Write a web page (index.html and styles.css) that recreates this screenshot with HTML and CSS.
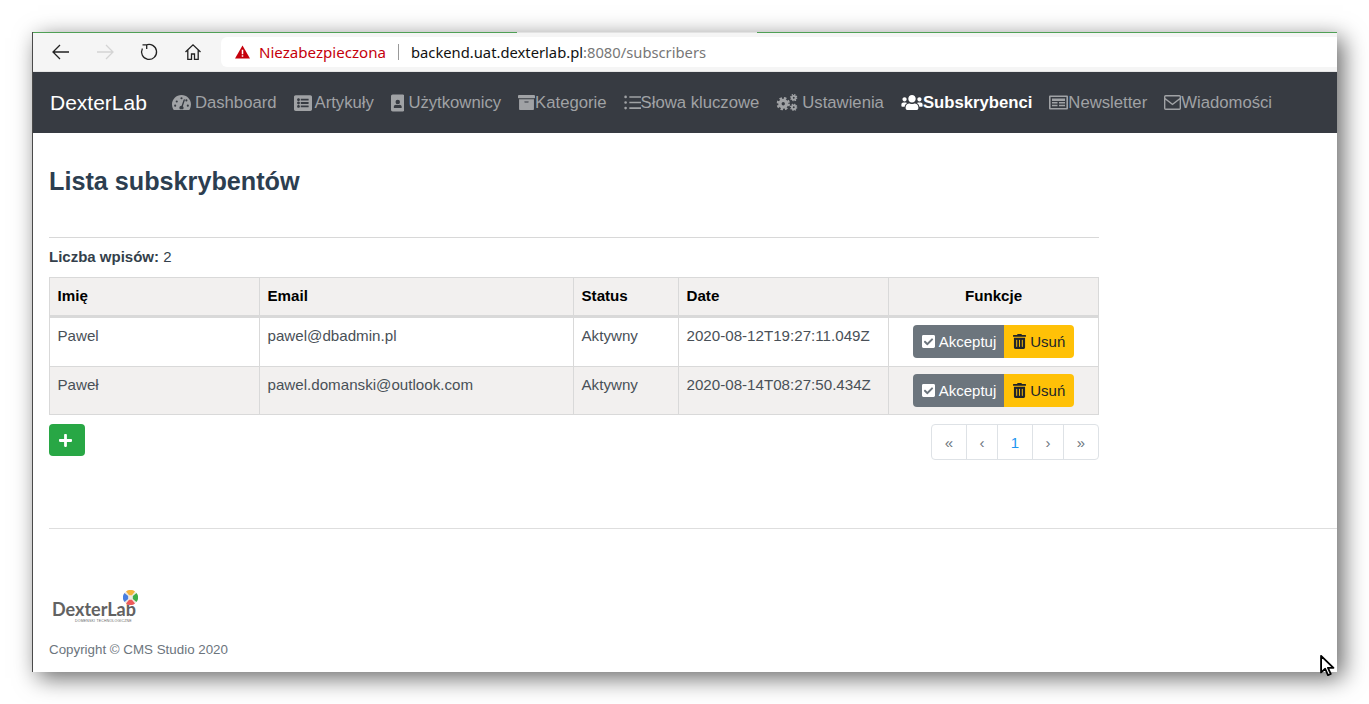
FILE: index.html
```html
<!DOCTYPE html>
<html lang="pl">
<head>
  <meta charset="utf-8">
  <title>Lista subskrybentów</title>
  <link rel="stylesheet" href="styles.css">
</head>
<body>
<svg class="defs" width="0" height="0">
  <symbol id="i-check" viewBox="0 0 448 512"><path d="M400 480H48c-26.51 0-48-21.49-48-48V80c0-26.51 21.49-48 48-48h352c26.51 0 48 21.49 48 48v352c0 26.51-21.49 48-48 48zm-204.686-98.059l184-184c6.248-6.248 6.248-16.379 0-22.627l-22.627-22.627c-6.248-6.248-16.379-6.249-22.628 0L184 302.745l-69.059-69.059c-6.248-6.248-16.379-6.248-22.628 0L69.686 256.313c-6.248 6.248-6.248 16.379 0 22.627l104 104c6.249 6.25 16.379 6.25 22.628.001z"/></symbol>
  <symbol id="i-trash" viewBox="0 0 448 512"><path d="M32 464a48 48 0 0 0 48 48h288a48 48 0 0 0 48-48V128H32zm272-256a16 16 0 0 1 32 0v224a16 16 0 0 1-32 0zm-96 0a16 16 0 0 1 32 0v224a16 16 0 0 1-32 0zm-96 0a16 16 0 0 1 32 0v224a16 16 0 0 1-32 0zM432 32H312l-9.4-18.7A24 24 0 0 0 281.1 0H166.8a23.72 23.72 0 0 0-21.4 13.3L136 32H16A16 16 0 0 0 0 48v32a16 16 0 0 0 16 16h416a16 16 0 0 0 16-16V48a16 16 0 0 0-16-16z"/></symbol>
  <symbol id="i-gear" viewBox="0 0 24 24"><circle cx="12" cy="12" r="6" fill="none" stroke="currentColor" stroke-width="6"/><circle cx="12" cy="12" r="10" fill="none" stroke="currentColor" stroke-width="4" stroke-dasharray="4.4 3.45"/></symbol>
</svg>

<div class="window">
  <div class="load-line"></div>
  <div class="chrome">
    <div class="chrome-buttons">
      <svg class="chrome-icon" viewBox="0 0 20 20"><path d="M18 10H2M9 3l-7 7 7 7" fill="none" stroke="#222" stroke-width="1.3"/></svg>
      <svg class="chrome-icon" viewBox="0 0 20 20"><path d="M2 10h16M11 3l7 7-7 7" fill="none" stroke="#d4d4d4" stroke-width="1.3"/></svg>
      <svg class="chrome-icon" viewBox="0 0 20 20"><path d="M7 3.1A7.5 7.5 0 1 1 3.4 6.5M3.5 2.8h4.2V7" fill="none" stroke="#222" stroke-width="1.3"/></svg>
      <svg class="chrome-icon" viewBox="0 0 20 20"><path d="M2.5 10L10 2.8l7.5 7.2M4.8 8.3v9h3.7V12h3v5.3h3.7v-9" fill="none" stroke="#222" stroke-width="1.3"/></svg>
    </div>
    <div class="omnibox">
      <svg class="warn" viewBox="0 0 16 14"><path d="M8 0l8 14H0z" fill="#c5000b"/><path d="M7.2 4.5h1.6v5H7.2zM7.2 10.5h1.6V12H7.2z" fill="#fff"/></svg>
      <span class="insecure">Niezabezpieczona</span>
      <span class="divider"></span>
      <span class="url">backend.uat.dexterlab.pl<span class="url-rest">:8080/subscribers</span></span>
    </div>
  </div>

  <nav class="navbar">
    <a class="brand" href="#">DexterLab</a>
    <a class="nav-item" href="#">
      <svg class="icon icon-gauge" viewBox="0 0 576 512"><path fill-rule="evenodd" d="M288 32C129 32 0 161 0 320c0 53 14 102 39 145 6 9 16 15 27 15h444c11 0 21-6 27-15 25-43 39-92 39-145C576 161 447 32 288 32zm0 64a32 32 0 1 1 0 64 32 32 0 0 1 0-64zM96 384a32 32 0 1 1 0-64 32 32 0 0 1 0 64zm48-128a32 32 0 1 1 0-64 32 32 0 0 1 0 64zm246-72L329 367c14 13 23 31 23 49 0 18-6 34-16 48H240c-10-14-16-30-16-48 0-35 28-64 64-64h3l61-182c3-11 15-17 26-14 11 4 16 15 12 28zm14 8a32 32 0 1 1 64 0 32 32 0 0 1-64 0zm76 192a32 32 0 1 1 0-64 32 32 0 0 1 0 64z"/></svg>
      <span class="gap">Dashboard</span>
    </a>
    <a class="nav-item" href="#">
      <svg class="icon icon-list-alt" viewBox="0 0 512 512"><path d="M464 480H48c-26.51 0-48-21.49-48-48V80c0-26.51 21.49-48 48-48h416c26.51 0 48 21.49 48 48v352c0 26.51-21.49 48-48 48zM128 120c-22.091 0-40 17.909-40 40s17.909 40 40 40 40-17.909 40-40-17.909-40-40-40zm0 96c-22.091 0-40 17.909-40 40s17.909 40 40 40 40-17.909 40-40-17.909-40-40-40zm0 96c-22.091 0-40 17.909-40 40s17.909 40 40 40 40-17.909 40-40-17.909-40-40-40zm288-136v-32c0-6.627-5.373-12-12-12H204c-6.627 0-12 5.373-12 12v32c0 6.627 5.373 12 12 12h200c6.627 0 12-5.373 12-12zm0 96v-32c0-6.627-5.373-12-12-12H204c-6.627 0-12 5.373-12 12v32c0 6.627 5.373 12 12 12h200c6.627 0 12-5.373 12-12zm0 96v-32c0-6.627-5.373-12-12-12H204c-6.627 0-12 5.373-12 12v32c0 6.627 5.373 12 12 12h200c6.627 0 12-5.373 12-12z"/></svg>
      <span class="gap-small">Artykuły</span>
    </a>
    <a class="nav-item" href="#">
      <svg class="icon icon-badge" viewBox="0 0 384 512"><path fill-rule="evenodd" d="M48 16h288c26 0 48 22 48 48v384c0 26-22 48-48 48H48c-26 0-48-22-48-48V64c0-26 22-48 48-48zm144 144a64 64 0 1 0 0 128 64 64 0 0 0 0-128zm-112 224c0 11 9 16 19 16h186c10 0 19-5 19-16v-19c0-32-29-58-64-58-11 0-19 8-48 8s-37-8-48-8c-35 0-64 26-64 58z"/></svg>
      <span class="gap">Użytkownicy</span>
    </a>
    <a class="nav-item" href="#">
      <svg class="icon" viewBox="0 0 512 512"><path d="M32 448c0 17.7 14.3 32 32 32h384c17.7 0 32-14.3 32-32V160H32v288zm160-212c0-6.6 5.4-12 12-12h104c6.6 0 12 5.4 12 12v8c0 6.6-5.4 12-12 12H204c-6.6 0-12-5.4-12-12v-8zM480 32H32C14.3 32 0 46.3 0 64v48c0 8.8 7.2 16 16 16h480c8.8 0 16-7.2 16-16V64c0-17.7-14.3-32-32-32z"/></svg>
      <span>Kategorie</span>
    </a>
    <a class="nav-item" href="#">
      <svg class="icon" viewBox="0 0 512 512"><path d="M48 48a40 40 0 1 1 0 80 40 40 0 0 1 0-80zm0 168a40 40 0 1 1 0 80 40 40 0 0 1 0-80zm0 168a40 40 0 1 1 0 80 40 40 0 0 1 0-80zM160 64h352v48H160zm0 168h352v48H160zm0 168h352v48H160z"/></svg>
      <span>Słowa kluczowe</span>
    </a>
    <a class="nav-item" href="#">
      <svg class="icon icon-gears" viewBox="0 0 42 34">
        <use href="#i-gear" x="0" y="6" width="27" height="27"/>
        <use href="#i-gear" x="27" y="0" width="15" height="15"/>
        <use href="#i-gear" x="27" y="19" width="15" height="15"/>
      </svg>
      <span class="gap">Ustawienia</span>
    </a>
    <a class="nav-item nav-active" href="#">
      <svg class="icon icon-users" viewBox="0 0 640 512"><path d="M96 224c35.3 0 64-28.7 64-64s-28.7-64-64-64-64 28.7-64 64 28.7 64 64 64zm448 0c35.3 0 64-28.7 64-64s-28.7-64-64-64-64 28.7-64 64 28.7 64 64 64zm32 32h-64c-17.6 0-33.5 7.1-45.1 18.6 40.3 22.1 68.9 62 75.1 109.4h66c17.7 0 32-14.3 32-32v-32c0-35.3-28.7-64-64-64zm-256 0c61.9 0 112-50.1 112-112S381.9 32 320 32 208 82.1 208 144s50.1 112 112 112zm76.8 32h-8.3c-20.8 10-43.9 16-68.5 16s-47.6-6-68.5-16h-8.3C179.6 288 128 339.6 128 403.2V432c0 26.5 21.5 48 48 48h288c26.5 0 48-21.5 48-48v-28.8c0-63.6-51.6-115.2-115.2-115.2zm-223.7-13.4C161.5 263.1 145.6 256 128 256H64c-35.3 0-64 28.7-64 64v32c0 17.7 14.3 32 32 32h65.9c6.3-47.4 34.9-87.3 75.2-109.4z"/></svg>
      <span>Subskrybenci</span>
    </a>
    <a class="nav-item" href="#">
      <svg class="icon icon-paper" viewBox="0 0 19 14"><path fill-rule="evenodd" d="M1 0h17a1 1 0 0 1 1 1v12a1 1 0 0 1-1 1H1a1 1 0 0 1-1-1V1a1 1 0 0 1 1-1zm.6 1.6v10.8h15.8V1.6zM3 3h13v2.4H3zM3 6.6h5.5v1.5H3zm0 2.7h5.5v1.5H3zM10 6.6h6v1.5h-6zm0 2.7h6v1.5h-6z"/></svg>
      <span>Newsletter</span>
    </a>
    <a class="nav-item" href="#">
      <svg class="icon" viewBox="0 0 16 14"><path fill-rule="evenodd" d="M1.5 0h13A1.5 1.5 0 0 1 16 1.5v11a1.5 1.5 0 0 1-1.5 1.5h-13A1.5 1.5 0 0 1 0 12.5v-11A1.5 1.5 0 0 1 1.5 0zm0 1.3a.2.2 0 0 0-.2.2v1.3L8 8l6.7-5.2V1.5a.2.2 0 0 0-.2-.2zm13.2 3.1L8 9.6 1.3 4.4v8.1c0 .1.1.2.2.2h13a.2.2 0 0 0 .2-.2z"/></svg>
      <span>Wiadomości</span>
    </a>
  </nav>

  <main class="content">
    <div class="panel">
      <h1 class="title">Lista subskrybentów</h1>
      <hr class="rule">
      <p class="count"><strong>Liczba wpisów:</strong> 2</p>
      <table class="grid">
        <thead>
          <tr>
            <th class="col-name">Imię</th>
            <th class="col-email">Email</th>
            <th class="col-status">Status</th>
            <th class="col-date">Date</th>
            <th class="col-actions">Funkcje</th>
          </tr>
        </thead>
        <tbody>
          <tr class="row-first">
            <td>Pawel</td>
            <td>pawel@dbadmin.pl</td>
            <td>Aktywny</td>
            <td>2020-08-12T19:27:11.049Z</td>
            <td class="actions">
              <div class="btn-group">
                <a class="btn btn-grey" href="#"><svg class="btn-icon"><use href="#i-check"/></svg>Akceptuj</a>
                <a class="btn btn-yellow" href="#"><svg class="btn-icon"><use href="#i-trash"/></svg>Usuń</a>
              </div>
            </td>
          </tr>
          <tr class="row-alt">
            <td>Paweł</td>
            <td>pawel.domanski@outlook.com</td>
            <td>Aktywny</td>
            <td>2020-08-14T08:27:50.434Z</td>
            <td class="actions">
              <div class="btn-group">
                <a class="btn btn-grey" href="#"><svg class="btn-icon"><use href="#i-check"/></svg>Akceptuj</a>
                <a class="btn btn-yellow" href="#"><svg class="btn-icon"><use href="#i-trash"/></svg>Usuń</a>
              </div>
            </td>
          </tr>
        </tbody>
      </table>
      <div class="table-foot">
        <a class="btn-add" href="#"><svg viewBox="0 0 448 512"><path d="M416 208H272V64c0-17.67-14.33-32-32-32h-32c-17.67 0-32 14.33-32 32v144H32c-17.67 0-32 14.33-32 32v32c0 17.67 14.33 32 32 32h144v144c0 17.67 14.33 32 32 32h32c17.67 0 32-14.33 32-32V304h144c17.67 0 32-14.33 32-32v-32c0-17.67-14.33-32-32-32z"/></svg></a>
        <ul class="pager">
          <li class="page p-first">«</li>
          <li class="page p-prev">‹</li>
          <li class="page p-now">1</li>
          <li class="page p-next">›</li>
          <li class="page p-last">»</li>
        </ul>
      </div>
    </div>
    <footer class="footer">
      <div class="logo">
        <span class="logo-name">DexterLab</span>
        <svg class="logo-mark" viewBox="0 0 16 16">
          <circle cx="8" cy="8" r="8" fill="#efe9e0"/>
          <path d="M3.2 1.6a8 8 0 0 1 9.6 0L9.5 5.5h-3z" fill="#f5b43c"/>
          <path d="M14.4 3.2a8 8 0 0 1 0 9.6L10.500 9.500v-3z" fill="#3fae49"/>
          <path d="M12.800 14.400a8 8 0 0 1-9.600 0L6.500 10.500h3z" fill="#ee5a5a"/>
          <path d="M1.600 12.800a8 8 0 0 1 0-9.600L5.500 6.500v3z" fill="#4a7fe0"/>
        </svg>
        <span class="logo-sub">DOMENSKI TECHNOLOGICZNE</span>
      </div>
      <p class="copyright">Copyright © CMS Studio 2020</p>
    </footer>
  </main>
</div>

<svg class="cursor" viewBox="0 0 16 24"><path d="M1 1v18l4.5-4 3 7 3-1.3-3-6.7h6z" fill="#fff" stroke="#000" stroke-width="2" stroke-linejoin="round"/></svg>
</body>
</html>
```

FILE: styles.css
```css
html, body {
    margin: 0;
    height: 100%;
    background: #fff;
    overflow: hidden;
}

body {
    position: relative;
    font-family: "Liberation Sans", Arial, sans-serif;
    color: #495057;
}

a {
    text-decoration: none;
}

.defs {
    position: absolute;
}

.window {
    box-sizing: border-box;
    width: 1305px;
    height: 640px;
    margin: 32px 0 0 32px;
    background: #fff;
    border-left: 1px solid #4a4a4a;
    box-shadow: 6px 6px 22px 0 rgb(0 0 0 / 60%);
    overflow: hidden;
}

.load-line {
    height: 1px;
    background: linear-gradient(to right, #4f9f55 484px, #e2e2e2 484px, #e2e2e2 724px, #4f9f55 724px);
}

.chrome {
    display: flex;
    align-items: center;
    height: 38px;
    background: #f5f5f5;
    border-bottom: 1px solid #e6e6e6;
}

.chrome-buttons {
    display: flex;
    gap: 24px;
    padding-left: 18px;
    width: 188px;
    box-sizing: border-box;
}

.chrome-icon {
    width: 20px;
    height: 20px;
}

.omnibox {
    flex: 1;
    display: flex;
    align-items: center;
    height: 30px;
    background: #fff;
    border-radius: 6px 0 0 6px;
    font-family: "Noto Sans", sans-serif;
    font-size: 14.75px;
}

.warn {
    width: 15px;
    height: 14px;
    margin-left: 14px;
}

.insecure {
    margin-left: 9px;
    font-size: 15.1px;
    color: #c5000b;
}

.divider {
    width: 1px;
    height: 16px;
    margin: 0 12px;
    background: #999;
}

.url {
    color: #111;
}

.url-rest {
    color: #777;
}

.navbar {
    display: flex;
    align-items: center;
    height: 61px;
    background: #373b42;
    padding-left: 17px;
    font-size: 16.7px;
}

.brand {
    font-size: 21px;
    color: #fff;
    margin-right: 25px;
}

.nav-item {
    display: flex;
    align-items: center;
    margin-right: 17px;
    color: #a0a2a5;
}

.nav-active {
    color: #fff;
    font-weight: bold;
}

.icon {
    width: 17px;
    height: 17px;
    fill: currentColor;
    flex: none;
}

.icon-gauge {
    width: 19px;
}

.icon-list-alt {
    width: 18px;
    height: 18px;
}

.icon-badge {
    width: 13.5px;
    height: 18px;
}

.icon-gears {
    width: 22px;
}

.icon-users {
    width: 22px;
}

.icon-paper {
    width: 19px;
}

.gap {
    margin-left: 4px;
}

.gap-small {
    margin-left: 3px;
}

.content {
    padding-left: 16px;
}

.panel {
    width: 1050px;
}

.title {
    margin: 0;
    padding-top: 33px;
    font-size: 25.2px;
    line-height: 30px;
    color: #2c3e50;
}

.rule {
    margin: 41px 0 0;
    border: 0;
    border-top: 1px solid #d8d8d8;
}

.count {
    margin: 10px 0 12px;
    font-size: 15px;
    line-height: 17px;
    color: #343f4b;
}

.grid {
    width: 1050px;
    border-collapse: collapse;
    table-layout: fixed;
    font-size: 15.15px;
}

.grid th, .grid td {
    border: 1px solid #d9d9d9;
    padding: 0 7.5px;
    text-align: left;
    box-sizing: border-box;
}

.grid th {
    height: 39px;
    padding-bottom: 2px;
    background: #f2f0ef;
    color: #000;
    border-bottom-width: 3px;
}

.grid td {
    height: 48px;
    vertical-align: top;
    padding-top: 9px;
}

.grid .row-first td {
    height: 50px;
}

.row-alt td {
    background: #f2f0ef;
}

.col-name {
    width: 210px;
}

.col-email {
    width: 314px;
}

.col-status {
    width: 105px;
}

.col-date {
    width: 210px;
}

.grid .col-actions {
    text-align: center;
}

.grid .actions {
    padding-top: 7px;
}

.btn-group {
    display: flex;
    justify-content: center;
    font-size: 15px;
}

.btn {
    display: flex;
    align-items: center;
    height: 33px;
    padding: 0 9px;
    box-sizing: border-box;
}

.btn-grey {
    padding-right: 8px;
    background: #6c757d;
    color: #fff;
    border-radius: 4px 0 0 4px;
}

.btn-yellow {
    background: #ffc107;
    color: #212529;
    border-radius: 0 4px 4px 0;
}

.btn-icon {
    width: 13px;
    height: 15px;
    margin-right: 4px;
    fill: currentColor;
}

.table-foot {
    display: flex;
    justify-content: space-between;
    align-items: flex-start;
    margin-top: 9px;
}

.btn-add {
    display: flex;
    align-items: center;
    justify-content: center;
    width: 36px;
    height: 32px;
    background: #28a745;
    border-radius: 4px;
}

.btn-add svg {
    width: 13px;
    height: 15px;
    margin-right: 4px;
    fill: #fff;
}

.pager {
    display: flex;
    margin: 0;
    padding: 0;
    list-style: none;
    border: 1px solid #dee2e6;
    border-radius: 4px;
    height: 34px;
    font-size: 15px;
}

.page {
    display: flex;
    align-items: center;
    justify-content: center;
    color: #6c757d;
    border-left: 1px solid #dee2e6;
    box-sizing: border-box;
}

.p-first {
    width: 34px;
    border-left: 0;
}

.p-prev {
    width: 31px;
}

.p-now {
    width: 35px;
    color: #1e96f0;
}

.p-next {
    width: 31px;
}

.p-last {
    width: 35px;
}

.footer {
    margin-top: 68px;
    border-top: 1px solid #dedede;
    padding-top: 59px;
}

.logo {
    position: relative;
    width: 90px;
    height: 36px;
    margin-left: 3px;
}

.logo-name {
    position: absolute;
    left: 0;
    top: 10px;
    font-family: Lato, "Liberation Sans", sans-serif;
    font-size: 18px;
    font-weight: 700;
    color: #626262;
}

.logo-mark {
    position: absolute;
    left: 71px;
    top: 2px;
    width: 15px;
    height: 15px;
}

.logo-sub {
    position: absolute;
    left: 23px;
    top: 31px;
    font-size: 3.5px;
    letter-spacing: .2px;
    white-space: nowrap;
    color: #666;
}

.copyright {
    margin: 18px 0 0;
    font-size: 13.35px;
    line-height: 16px;
    color: #6c757d;
}

.cursor {
    position: absolute;
    left: 1320px;
    top: 655px;
    width: 15px;
    height: 22px;
}
```
